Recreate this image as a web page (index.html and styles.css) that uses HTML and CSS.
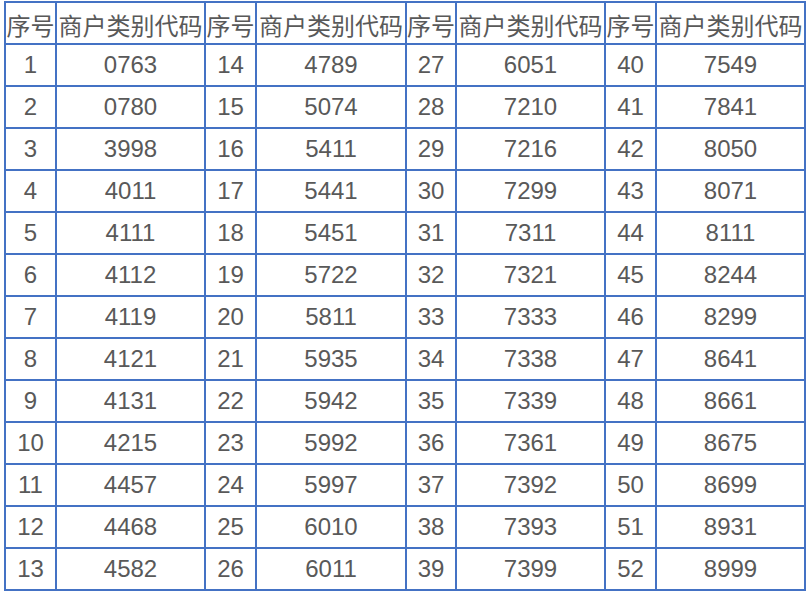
FILE: index.html
```html
<!DOCTYPE html>
<html lang="zh">
<head>
<meta charset="utf-8">
<title>商户类别代码</title>
<link rel="stylesheet" href="styles.css">
</head>
<body>
<div class="grid">
  <div class="cell head">序号</div><div class="cell head">商户类别代码</div>
  <div class="cell head">序号</div><div class="cell head">商户类别代码</div>
  <div class="cell head">序号</div><div class="cell head">商户类别代码</div>
  <div class="cell head">序号</div><div class="cell head">商户类别代码</div>

  <div class="cell">1</div><div class="cell">0763</div><div class="cell">14</div><div class="cell">4789</div><div class="cell">27</div><div class="cell">6051</div><div class="cell">40</div><div class="cell">7549</div>
  <div class="cell">2</div><div class="cell">0780</div><div class="cell">15</div><div class="cell">5074</div><div class="cell">28</div><div class="cell">7210</div><div class="cell">41</div><div class="cell">7841</div>
  <div class="cell">3</div><div class="cell">3998</div><div class="cell">16</div><div class="cell">5411</div><div class="cell">29</div><div class="cell">7216</div><div class="cell">42</div><div class="cell">8050</div>
  <div class="cell">4</div><div class="cell">4011</div><div class="cell">17</div><div class="cell">5441</div><div class="cell">30</div><div class="cell">7299</div><div class="cell">43</div><div class="cell">8071</div>
  <div class="cell">5</div><div class="cell">4111</div><div class="cell">18</div><div class="cell">5451</div><div class="cell">31</div><div class="cell">7311</div><div class="cell">44</div><div class="cell">8111</div>
  <div class="cell">6</div><div class="cell">4112</div><div class="cell">19</div><div class="cell">5722</div><div class="cell">32</div><div class="cell">7321</div><div class="cell">45</div><div class="cell">8244</div>
  <div class="cell">7</div><div class="cell">4119</div><div class="cell">20</div><div class="cell">5811</div><div class="cell">33</div><div class="cell">7333</div><div class="cell">46</div><div class="cell">8299</div>
  <div class="cell">8</div><div class="cell">4121</div><div class="cell">21</div><div class="cell">5935</div><div class="cell">34</div><div class="cell">7338</div><div class="cell">47</div><div class="cell">8641</div>
  <div class="cell">9</div><div class="cell">4131</div><div class="cell">22</div><div class="cell">5942</div><div class="cell">35</div><div class="cell">7339</div><div class="cell">48</div><div class="cell">8661</div>
  <div class="cell">10</div><div class="cell">4215</div><div class="cell">23</div><div class="cell">5992</div><div class="cell">36</div><div class="cell">7361</div><div class="cell">49</div><div class="cell">8675</div>
  <div class="cell">11</div><div class="cell">4457</div><div class="cell">24</div><div class="cell">5997</div><div class="cell">37</div><div class="cell">7392</div><div class="cell">50</div><div class="cell">8699</div>
  <div class="cell">12</div><div class="cell">4468</div><div class="cell">25</div><div class="cell">6010</div><div class="cell">38</div><div class="cell">7393</div><div class="cell">51</div><div class="cell">8931</div>
  <div class="cell">13</div><div class="cell">4582</div><div class="cell">26</div><div class="cell">6011</div><div class="cell">39</div><div class="cell">7399</div><div class="cell">52</div><div class="cell">8999</div>
</div>
</body>
</html>
```

FILE: styles.css
```css
html, body {
  margin: 0;
  padding: 0;
  background: #ffffff;
}

body {
  padding: 1px 0 0 4px;
}

.grid {
  display: grid;
  grid-template-columns: 49px 147px 49px 148px 48px 147px 49px 147px;
  grid-auto-rows: 40px;
  gap: 2px;
  padding: 2px;
  width: 802px;
  box-sizing: border-box;
  background: #4472c4;
}

.cell {
  background: #ffffff;
  display: flex;
  align-items: center;
  justify-content: center;
  font-family: "Liberation Sans", Arial, "Noto Sans CJK SC", sans-serif;
  font-size: 24px;
  color: #595959;
  white-space: nowrap;
}

.head {
  font-family: "Noto Sans CJK SC", "Liberation Sans", sans-serif;
  font-size: 24px;
  padding-top: 2px;
}
```
